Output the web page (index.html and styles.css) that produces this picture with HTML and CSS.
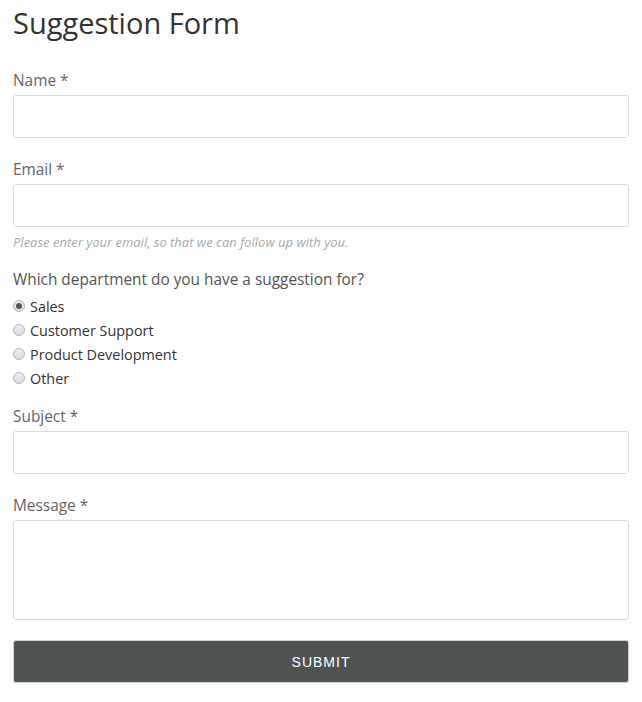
FILE: index.html
```html
<!DOCTYPE html>
<html>
<head>
<meta charset="utf-8">
<link rel="stylesheet" href="styles.css">
</head>
<body>
<form class="form">
  <h1 class="title">Suggestion Form</h1>
  <div class="field">
    <label class="label">Name *</label>
    <input class="input" type="text">
  </div>
  <div class="field">
    <label class="label">Email *</label>
    <input class="input" type="text">
    <div class="help">Please enter your email, so that we can follow up with you.</div>
  </div>
  <div class="group">
    <div class="question">Which department do you have a suggestion for?</div>
    <label class="option"><input type="radio" name="dept" checked><span>Sales</span></label>
    <label class="option"><input type="radio" name="dept"><span>Customer Support</span></label>
    <label class="option"><input type="radio" name="dept"><span>Product Development</span></label>
    <label class="option"><input type="radio" name="dept"><span>Other</span></label>
  </div>
  <div class="field">
    <label class="label">Subject *</label>
    <input class="input" type="text">
  </div>
  <div class="field">
    <label class="label">Message *</label>
    <textarea class="input textarea"></textarea>
  </div>
  <button class="submit" type="button">SUBMIT</button>
</form>
</body>
</html>
```
FILE: styles.css
```css
html, body {
  margin: 0;
  padding: 0;
  background: #fff;
}
body {
  font-family: "Open Sans", "Liberation Sans", sans-serif;
  color: #333;
}
.form {
  display: flex;
  flex-direction: column;
  padding: 0 13px 0 13px;
}
.title {
  margin: 4px 0 28px 0;
  font-size: 29px;
  font-weight: 400;
  line-height: 38px;
  color: #333;
}
.field {
  display: flex;
  flex-direction: column;
  margin-bottom: 21px;
}
.label {
  font-size: 15.4px;
  line-height: 22px;
  color: #666;
  margin-bottom: 3px;
}
.input {
  box-sizing: border-box;
  height: 43px;
  width: 100%;
  border: 1px solid #dcdcdc;
  border-radius: 3px;
  margin: 0;
  font: inherit;
  background: #fff;
}
.textarea {
  height: 100px;
  resize: none;
}
.help {
  margin-top: 6px;
  font-size: 13px;
  line-height: 18px;
  font-style: italic;
  color: #aaa;
  margin-bottom: -3px;
}
.group {
  display: flex;
  flex-direction: column;
  margin-bottom: 16px;
}
.question {
  font-size: 15.4px;
  line-height: 22px;
  color: #555;
  margin-bottom: 3px;
}
.option {
  display: flex;
  align-items: center;
  height: 24px;
  font-size: 14.4px;
  color: #333;
}
.option input {
  appearance: none;
  -webkit-appearance: none;
  box-sizing: border-box;
  margin: 0 5px 0 0;
  width: 12px;
  height: 12px;
  border-radius: 50%;
  border: 1px solid #b4b4b4;
  background: linear-gradient(#eeeeee, #dcdcdc);
  position: relative;
}
.option input:checked::after {
  content: "";
  position: absolute;
  left: 2px;
  top: 2px;
  width: 6px;
  height: 6px;
  border-radius: 50%;
  background: #555;
}
.submit {
  margin-top: -1px;
  box-sizing: border-box;
  height: 43px;
  width: 100%;
  background: #4f5253;
  border: 1px solid #d0d0d0;
  border-radius: 3px;
  color: #fff;
  font-family: "Liberation Sans", Arial, sans-serif;
  font-size: 14px;
  letter-spacing: 1px;
}
```
